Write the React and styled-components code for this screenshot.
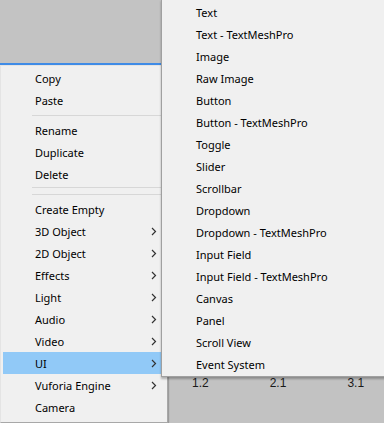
import React from 'react'
import styled, { createGlobalStyle } from 'styled-components';

const GlobalStyle = createGlobalStyle`
html, body {
  margin: 0;
  padding: 0;
  background: #c3c3c3;
}
* { box-sizing: border-box; }
`;

const Screen = styled.div`
position: relative;
width: 384px;
height: 423px;
overflow: hidden;
background: #c2c2c2;
font-family: 'Noto Sans', sans-serif;
`;

const TopPanel = styled.div`
height: 65px;
background: #c3c3c3;
border-bottom: 2px solid #3f8be6;
`;

const Ruler = styled.div`
display: flex;
padding: 311px 0 0 192px;
gap: 61px;
font-family: 'Liberation Sans', Arial, sans-serif;
font-size: 12px;
color: #1a1a1a;
`;

const ContextMenu = styled.ul`
position: absolute;
left: 0;
top: 65px;
width: 168px;
height: 358px;
margin: 0;
padding: 1px 2px 2px 2px;
list-style: none;
background: #f0f0f0;
border: 1px solid #e4e4e4;
border-right-color: #a8a8a8;
border-bottom-color: #a8a8a8;
box-shadow: 1px 1px 1px rgba(0,0,0,.2);
`;

const SubMenu = styled.ul`
position: absolute;
left: 161px;
top: -1px;
width: 240px;
height: 378px;
margin: 0;
padding: 1px 0 0 1px;
list-style: none;
background: #f0f0f0;
border: 1px solid #a0a0a0;
box-shadow: 0 2px 2px rgba(0,0,0,.28);
`;

const Item = styled.li`
display: flex;
align-items: center;
height: 22px;
padding-left: ${({ indent }) => indent}px;
padding-right: 8px;
font-size: 11px;
color: #000;
background: ${({ active }) => (active ? '#91c9f7' : 'transparent')};
`;

const Label = styled.span`
flex: 1;
white-space: nowrap;
`;

const Separator = styled.li`
height: ${({ size }) => size}px;
padding-top: ${({ offset }) => offset}px;
padding-left: 29px;
&::after {
  content: '';
  display: block;
  height: 1px;
  background: #d7d7d7;
}
`;

const Chevron = () => (
  <svg width="6" height="9" viewBox="0 0 6 9">
    <polyline points="1,1 4.5,4.5 1,8" fill="none" stroke="#333" strokeWidth="1.2" />
  </svg>
);

const mainItems = [
  { t: 'Copy' }, { t: 'Paste' }, { sep: 8, off: 4 },
  { t: 'Rename' }, { t: 'Duplicate' }, { t: 'Delete' },
  { sep: 6, off: 2 }, { sep: 7, off: 3 },
  { t: 'Create Empty' }, { t: '3D Object', sub: true }, { t: '2D Object', sub: true },
  { t: 'Effects', sub: true }, { t: 'Light', sub: true }, { t: 'Audio', sub: true },
  { t: 'Video', sub: true }, { t: 'UI', sub: true, active: true },
  { t: 'Vuforia Engine', sub: true }, { t: 'Camera' },
];

const uiItems = [
  'Text', 'Text - TextMeshPro', 'Image', 'Raw Image', 'Button', 'Button - TextMeshPro',
  'Toggle', 'Slider', 'Scrollbar', 'Dropdown', 'Dropdown - TextMeshPro', 'Input Field',
  'Input Field - TextMeshPro', 'Canvas', 'Panel', 'Scroll View', 'Event System',
];

export default function App() {
  return (
    <Screen>
      <GlobalStyle />
      <TopPanel />
      <Ruler>
        <span>1.2</span>
        <span>2.1</span>
        <span>3.1</span>
      </Ruler>
      <ContextMenu>
        {mainItems.map((it, i) =>
          it.sep ? (
            <Separator key={i} size={it.sep} offset={it.off} />
          ) : (
            <Item key={i} indent={32} active={it.active}>
              <Label>{it.t}</Label>
              {it.sub && <Chevron />}
            </Item>
          )
        )}
      </ContextMenu>
      <SubMenu>
        {uiItems.map((t) => (
          <Item key={t} indent={33}>
            <Label>{t}</Label>
          </Item>
        ))}
      </SubMenu>
    </Screen>
  );
}
